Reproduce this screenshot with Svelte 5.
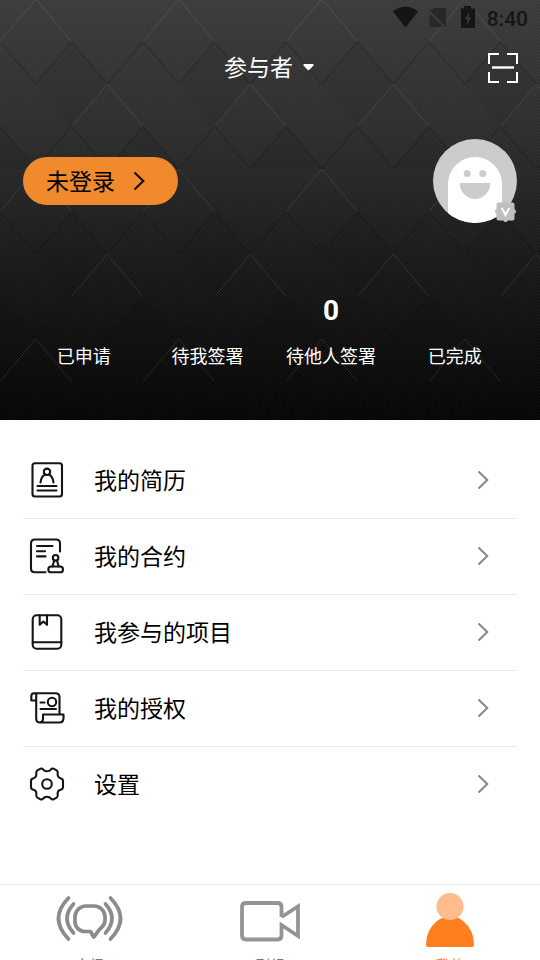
<script>
  const stats = [
    { label: '已申请', count: '' },
    { label: '待我签署', count: '' },
    { label: '待他人签署', count: '0' },
    { label: '已完成', count: '' }
  ];

  const menu = [
    { id: 'resume', label: '我的简历' },
    { id: 'contract', label: '我的合约' },
    { id: 'project', label: '我参与的项目' },
    { id: 'auth', label: '我的授权' },
    { id: 'settings', label: '设置' }
  ];

  const tabs = [
    { id: 'market', label: '市场' },
    { id: 'crew', label: '剧组' },
    { id: 'mine', label: '我的' }
  ];

  let active = 'mine';
</script>

<div class="page">
  <section class="hero">
    <svg class="hero-bg" width="540" height="420" viewBox="0 0 540 420">
      <defs>
        <linearGradient id="shade" x1="0" y1="0" x2="0" y2="1">
          <stop offset="0" stop-color="#393939" />
          <stop offset="0.33" stop-color="#2a2a2a" />
          <stop offset="0.67" stop-color="#141414" />
          <stop offset="1" stop-color="#020202" />
        </linearGradient>
        <pattern id="hatchA" width="3" height="3" patternUnits="userSpaceOnUse">
          <path d="M-1 1L1 -1M0 3L3 0M2 4L4 2" stroke="#fff" stroke-opacity="0.08" stroke-width="0.9" />
        </pattern>
        <pattern id="hatchB" width="3" height="3" patternUnits="userSpaceOnUse">
          <path d="M-1 2L1 4M0 0L3 3M2 -1L4 1" stroke="#fff" stroke-opacity="0.08" stroke-width="0.9" />
        </pattern>
        <pattern id="weave" width="143" height="170" patternUnits="userSpaceOnUse" x="0" y="-1">
          <g fill="none">
            <path d="M0 42.5L35.75 0L71.5 42.5M71.5 127.5L107.25 85L143 127.5" stroke="#fff" stroke-opacity="0.09" />
            <path d="M0 42.5L35.75 85M71.5 42.5L35.75 85M71.5 42.5L107.25 85L143 42.5M0 127.5L35.75 170L71.5 127.5L107.25 170L143 127.5" stroke="#000" stroke-opacity="0.14" stroke-width="1.8" />
          </g>
          <path d="M71.5 42.5L107.25 85L71.5 127.5L35.75 85ZM0 127.5L35.75 170H0ZM143 127.5V170H107.25Z" fill="#000" fill-opacity="0.05" />
        </pattern>
      </defs>
      <rect width="540" height="420" fill="url(#shade)" />
      <rect width="320" height="420" fill="url(#hatchB)" />
      <rect x="320" width="220" height="420" fill="url(#hatchA)" />
      <rect width="540" height="420" fill="url(#weave)" />
    </svg>

    <div class="status-bar">
      <svg width="84" height="24" viewBox="0 0 84 24">
        <path d="M0 6.500C7 0 18 0 25 6.500L12.500 22.500Z" fill="#151515" />
        <g fill="#282828">
          <path d="M41.500 3H53V19.500L37.500 5.500Z" />
          <path d="M36.500 8.500L50.500 22H36.500Z" />
          <path d="M36 4.500L37 3.500L54 21L53 22Z" />
        </g>
        <path d="M68 3.500H71V1H78V3.500H82V23H68Z" fill="#151515" />
        <path d="M76.500 7L71.500 14H74.500L73.500 20L78.500 12.500H75.500Z" fill="#393939" />
      </svg>
      <span class="clock">8:40</span>
    </div>

    <header class="title-bar">
      <button class="role">
        <span>参与者</span>
        <svg width="11" height="7" viewBox="0 0 11 7"><path d="M1 0H10Q11 .5 10.500 1.500L6.200 6Q5.500 6.500 4.800 6L.5 1.500Q0 .5 1 0Z" fill="#fff" /></svg>
      </button>
      <button class="scan" aria-label="scan">
        <svg width="30" height="30" viewBox="0 0 30 30" fill="none" stroke="#fff" stroke-width="2">
          <path d="M1 11V1H11M19 1H29V11M29 19V29H19M11 29H1V19" />
          <path d="M4 14.500H26" stroke-width="2.400" />
        </svg>
      </button>
    </header>

    <div class="profile">
      <button class="login">
        <span>未登录</span>
        <svg width="12" height="20" viewBox="0 0 12 20"><path d="M1.500 1.500L10.300 10L1.500 18.500" fill="none" stroke="#111" stroke-width="2.200" /></svg>
      </button>
      <svg class="avatar" width="84" height="84" viewBox="0 0 84 84">
        <clipPath id="face"><circle cx="42" cy="42" r="42" /></clipPath>
        <circle cx="42" cy="42" r="42" fill="#ccc" />
        <path d="M15 84V45A27 27 0 0 1 69 45V84Z" fill="#fff" clip-path="url(#face)" />
        <circle cx="34.200" cy="34.500" r="3.500" fill="#ccc" />
        <circle cx="49.800" cy="34.500" r="3.500" fill="#ccc" />
        <path d="M26.700 44H57.300A15.300 16 0 0 1 26.700 44Z" fill="#ccc" />
        <g transform="translate(72.500 72.500)">
          <g fill="#bfbfbf">
            <rect x="-8" y="-8" width="16" height="16" rx="2" transform="rotate(45)" />
            <rect x="-9" y="-9" width="18" height="18" rx="2" />
          </g>
          <path d="M-3.800 -3.500L0 3.500L3.800 -3.500" fill="none" stroke="#fff" stroke-width="2" />
        </g>
      </svg>
    </div>

    <div class="stats">
      {#each stats as stat}
        <div class="stat">
          <strong>{stat.count}</strong>
          <span>{stat.label}</span>
        </div>
      {/each}
    </div>
  </section>

  <nav class="menu">
    {#each menu as item}
      <a class="menu-item" href="#{item.id}">
        <svg class="menu-icon" width="40" height="40" viewBox="0 0 40 40">
          {#if item.id === 'resume'}
            <rect x="5.500" y="3.300" width="29.500" height="33.200" rx="2.500" />
            <circle cx="20" cy="11.800" r="3.200" />
            <path d="M13.500 22.500C14 18 16 15.500 18.200 14.500M21.800 14.500C24 15.500 26 18 26.500 22.500M10.500 26H29.500M10.500 30.500H29.500" />
          {:else if item.id === 'contract'}
            <path d="M33 15.500V7.500Q33 3.500 29 3.500H8Q4 3.500 4 7.500V32.500Q4 36.300 8 36.300H18.500M10 10H25.500M10 15.200H18M10 20.400H18.500" />
            <circle cx="28.600" cy="21.800" r="2.800" />
            <path d="M27.200 24.500L25.500 30.500M30 24.500L31.700 30.500" />
            <rect x="21.300" y="30.500" width="14.700" height="5.800" rx="2.900" />
          {:else if item.id === 'project'}
            <rect x="5.700" y="3.300" width="28.600" height="33.400" rx="4" />
            <path d="M5.700 30.300H34.300M12.700 3.300V12.800L16.400 9.500L20 12.800V3.300" />
          {:else if item.id === 'auth'}
            <path d="M9.200 12.500H4.300V8.500Q4.300 5.300 7 5.300T9.200 8V30.500Q9.200 34.500 13 34.500H32.500Q36.500 34.500 36.500 30V26.500H16V31Q16 34.500 12.500 34.500M7 5.300H28.500Q32.500 5.300 32.500 9V26.500M13.500 14.500H17.500M13.500 21H29" />
            <circle cx="25" cy="14" r="4.200" />
          {:else}
            <path d="M20 7.300Q22.500 7.300 24 5.300Q25 4 26.500 4.700L30 6.700Q31 7.500 30.700 9.500Q30.200 13.300 33.500 14.200Q36 14.800 36 17V23Q36 25.200 33.500 25.800Q30.200 26.700 30.700 30.500Q31 32.500 30 33.300L26.500 35.300Q25 36 24 34.700Q22.500 32.700 20 32.700T16 34.700Q15 36 13.500 35.300L10 33.300Q9 32.500 9.300 30.500Q9.800 26.700 6.500 25.800Q4 25.200 4 23V17Q4 14.800 6.500 14.200Q9.800 13.300 9.300 9.500Q9 7.500 10 6.700L13.500 4.700Q15 4 16 5.300Q17.500 7.300 20 7.300Z" />
            <circle cx="20" cy="20" r="4.800" />
          {/if}
        </svg>
        <span class="menu-label">{item.label}</span>
        <svg class="chevron" width="12" height="20" viewBox="0 0 12 20"><path d="M1.500 1.500L10.300 10L1.500 18.500" /></svg>
      </a>
    {/each}
  </nav>

  <footer class="tab-bar">
    {#each tabs as tab}
      <button class="tab" class:active={tab.id === active} on:click={() => (active = tab.id)}>
        <svg width="68" height="60" viewBox="0 0 68 60">
          {#if tab.id === 'market'}
            <g fill="none" stroke="#8b8b8b" stroke-width="3.700" stroke-linecap="round" stroke-linejoin="round">
              <path d="M12.500 13Q-7.500 33.500 12.500 54M17.500 19Q4.500 33.500 17.500 48M54.500 13Q74.500 33.500 54.500 54M49.500 19Q62.500 33.500 49.500 48" />
              <path d="M30 21H38A11 11 0 0 1 49 32V35Q49 39.500 45.500 42.500Q42 45.500 40.500 48.500L37.700 52L34.500 46.500H29A10 10 0 0 1 19 36.500V32A11 11 0 0 1 30 21Z" />
            </g>
          {:else if tab.id === 'crew'}
            <path d="M45.500 32V22Q45.500 18 41.500 18H10Q6 18 6 22V50.500Q6 54.500 10 54.500H41.500Q45.500 54.500 45.500 50.500V40L62 51V21.500L45.500 32" fill="none" stroke="#949494" stroke-width="3.800" />
          {:else}
            <path d="M10 60Q10 45 21 36Q34 26 47 36Q58 45 58 60Q58 62 56 62H12Q10 62 10 60Z" fill="#ff7e1e" />
            <circle cx="34" cy="21.500" r="13.600" fill="#ffbc8c" />
          {/if}
        </svg>
        <span>{tab.label}</span>
      </button>
    {/each}
  </footer>
</div>

<style>
  :global(body) {
    background: #fff;
    overflow: hidden;
  }

  .page {
    width: 540px;
    height: 960px;
    display: flex;
    flex-direction: column;
    overflow: hidden;
    font-family: Roboto, 'Noto Sans CJK SC', sans-serif;
    color: #000;
  }

  button {
    font: inherit;
    border: 0;
    padding: 0;
    background: none;
    cursor: pointer;
  }

  svg {
    display: block;
    flex-shrink: 0;
  }

  .hero {
    position: relative;
    height: 420px;
    flex-shrink: 0;
    color: #fff;
  }

  .hero-bg {
    position: absolute;
    inset: 0;
    z-index: -1;
  }

  .status-bar {
    display: flex;
    justify-content: flex-end;
    align-items: center;
    gap: 10px;
    height: 36px;
    padding-right: 12px;
  }

  .status-bar svg {
    margin-bottom: 2px;
  }

  .clock {
    font-size: 21px;
    font-weight: 500;
    line-height: 36px;
    color: #161616;
    padding-top: 2px;
  }

  .title-bar {
    display: grid;
    grid-template-columns: 1fr auto 1fr;
    align-items: center;
    height: 62px;
    padding: 1px 22px 0 20px;
    box-sizing: border-box;
  }

  .role {
    grid-column: 2;
    display: flex;
    align-items: center;
    gap: 10px;
    font-size: 23px;
    line-height: 34px;
    color: #fff;
  }

  .role span {
    padding-top: 3px;
  }

  .scan {
    justify-self: end;
  }

  .profile {
    display: flex;
    justify-content: space-between;
    align-items: center;
    margin-top: 41px;
    padding: 0 23px;
  }

  .login {
    display: flex;
    align-items: center;
    gap: 18px;
    width: 155px;
    height: 48px;
    padding-left: 23px;
    border-radius: 24px;
    background: #f08a2c;
    font-size: 23px;
    line-height: 34px;
    color: #000;
  }

  .login span {
    padding-top: 3px;
  }

  .avatar {
    overflow: visible;
  }

  .stats {
    display: flex;
    padding: 70px 23.5px 0 22px;
  }

  .stat {
    flex: 1;
    display: flex;
    flex-direction: column;
    align-items: center;
    white-space: nowrap;
    font-size: 18px;
    line-height: 26px;
  }

  .stat strong {
    height: 36px;
    margin-bottom: 15px;
    font-size: 28px;
    font-weight: 700;
    line-height: 36px;
  }

  .menu {
    flex: 1;
    padding: 23px 23px 0;
  }

  .menu-item {
    display: flex;
    align-items: center;
    height: 76px;
    box-sizing: border-box;
    padding: 0 28px 2px 4px;
    border-bottom: 1px solid #ebebeb;
    color: inherit;
    text-decoration: none;
  }

  .menu-item:last-child {
    border-bottom-color: transparent;
  }

  .menu-icon {
    fill: none;
    stroke: #151515;
    stroke-width: 2.1;
    stroke-linecap: round;
    stroke-linejoin: round;
  }

  .menu-label {
    flex: 1;
    margin-left: 27px;
    padding-top: 4px;
    font-size: 23px;
    line-height: 34px;
  }

  .chevron {
    fill: none;
    stroke: #888;
    stroke-width: 2;
  }

  .tab-bar {
    display: flex;
    height: 76px;
    box-sizing: border-box;
    flex-shrink: 0;
    border-top: 1px solid #e6e6e6;
    overflow: hidden;
  }

  .tab {
    flex: 1;
    display: flex;
    flex-direction: column;
    align-items: center;
    justify-content: flex-start;
    font-size: 15px;
    line-height: 22px;
    color: #777;
  }

  .tab svg {
    margin-bottom: 10px;
    overflow: visible;
  }

  .tab.active {
    color: #ff7e1e;
  }
</style>
